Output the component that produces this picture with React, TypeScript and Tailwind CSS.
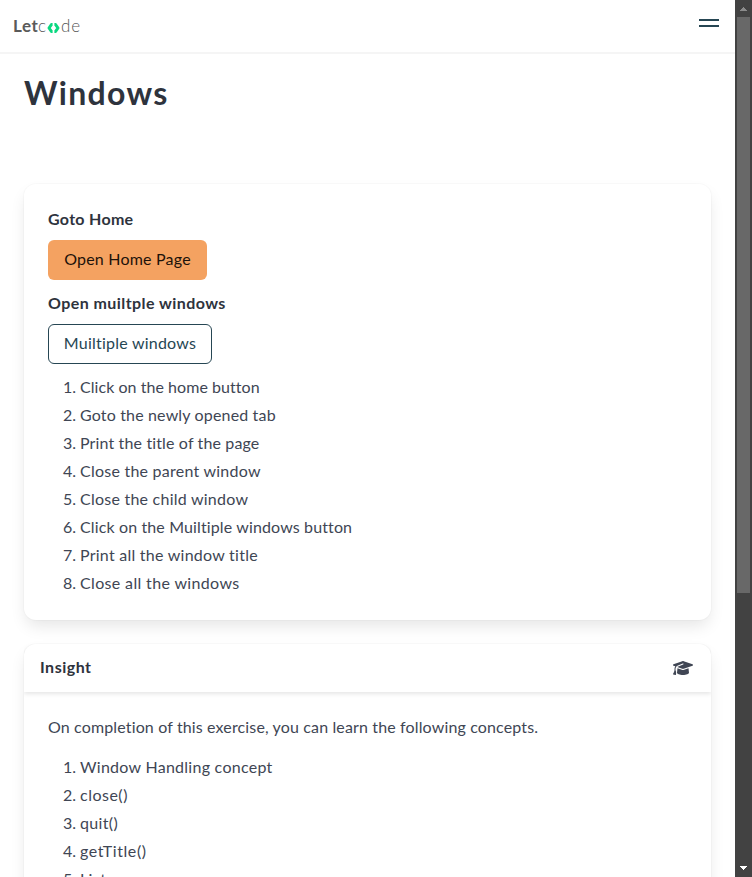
import React from "react";
import { FaGraduationCap } from "react-icons/fa6";

type Line = { text: string; cls: string };

const steps: Line[] = [
  { text: "Click on the home button", cls: "tracking-[0.05px]" },
  { text: "Goto the newly opened tab", cls: "tracking-[0.16px]" },
  { text: "Print the title of the page", cls: "tracking-[0.14px]" },
  { text: "Close the parent window", cls: "tracking-[0.24px]" },
  { text: "Close the child window", cls: "tracking-[0.24px]" },
  { text: "Click on the Muiltiple windows button", cls: "tracking-[0.13px]" },
  { text: "Print all the window title", cls: "tracking-[0.25px]" },
  { text: "Close all the windows", cls: "tracking-[0.35px]" },
];

const concepts: Line[] = [
  { text: "Window Handling concept", cls: "tracking-[0.27px]" },
  { text: "close()", cls: "tracking-[0.5px]" },
  { text: "quit()", cls: "tracking-[0.35px]" },
  { text: "getTitle()", cls: "tracking-[0.6px]" },
  { text: "List", cls: "tracking-[0.4px]" },
];

function Numbered({ items }: { items: Line[] }) {
  return (
    <ol className="flex flex-col gap-1">
      {items.map((item, i) => (
        <li key={item.text} className="flex h-6 whitespace-nowrap leading-[22px]">
          <span className="w-7 text-right">{i + 1}.</span>
          <span className={`ml-1 ${item.cls}`}>{item.text}</span>
        </li>
      ))}
    </ol>
  );
}

function Logo() {
  return (
    <div className="flex h-5 items-center text-[17px] leading-5 text-[#5a5a5a]">
      <span className="w-[25px] font-bold tracking-[0.5px]">Let</span>
      <span className="w-[9px] font-[300] tracking-[0.5px] text-[#555]">c</span>
      <svg className="mt-[3px] h-2.5 w-[13px]" viewBox="0 0 13 10" fill="none" stroke="#0bd880" strokeWidth="3" strokeLinejoin="round">
        <path d="M5.6 1.6H4.4L2 5L4.4 8.4H5.6M7.4 1.6H8.6L11 5L8.6 8.4H7.4" />
      </svg>
      <span className="ml-px font-[300] tracking-[1px] text-[#555]">de</span>
    </div>
  );
}

const boxShadow =
  "shadow-[0_8px_16px_-2px_rgba(10,10,10,0.1),0_0_0_1px_rgba(10,10,10,0.02)]";

export default function App() {
  return (
    <div className="flex h-[877px] w-[752px] overflow-hidden bg-white font-['Lato','Liberation_Sans',sans-serif] text-base text-[#404654]">
      <div className="flex w-[735px] shrink-0 flex-col overflow-hidden">
        <nav className="flex h-[52px] shrink-0 items-center justify-between pl-[13px] pr-4 shadow-[0_2px_0_0_#f5f5f5]">
          <Logo />
          <div className="mb-[6px] flex w-5 flex-col gap-1">
            <div className="h-0.5 bg-[#264653]" />
            <div className="h-0.5 bg-[#264653]" />
          </div>
        </nav>
        <main className="flex flex-col px-6">
          <h1 className="mt-[23px] h-9 text-[32px] font-bold leading-9 tracking-[1.3px] text-[#2e333d]">Windows</h1>
          <section className={`mt-[73px] h-[436px] shrink-0 rounded-xl bg-white p-6 ${boxShadow}`}>
            <div className="h-6 font-bold leading-[22px] text-[#2e333d]">
              <span className="tracking-[0.3px]">Goto Home</span>
            </div>
            <button className="mt-2 flex h-10 w-[159px] items-center justify-center rounded-md bg-[#f4a261] pb-0.5 text-[#1d120a]">
              <span className="tracking-[0.2px]">Open Home Page</span>
            </button>
            <div className="mt-3 h-6 font-bold leading-[22px] text-[#2e333d]">
              <span className="tracking-[0.43px]">Open muiltple windows</span>
            </div>
            <button className="mb-3 mt-2 flex h-10 w-[164px] items-center justify-center rounded-md border border-[#264653] bg-white pb-0.5 text-[#264653]">
              <span className="tracking-[0.23px]">Muiltiple windows</span>
            </button>
            <Numbered items={steps} />
          </section>
          <section className={`mt-6 h-[300px] shrink-0 rounded-xl bg-white ${boxShadow}`}>
            <header className="flex h-12 items-center justify-between rounded-t-xl pl-4 pr-[18px] shadow-[0_2px_4px_rgba(10,10,10,0.1)] [clip-path:inset(0_0_-8px_0)]">
              <span className="pb-0.5 font-bold tracking-[0.5px] text-[#2e333d]">Insight</span>
              <FaGraduationCap className="h-4 w-5" />
            </header>
            <div className="p-6">
              <p className="mb-4 h-6 whitespace-nowrap leading-[22px]">
                <span className="tracking-[0.14px]">On completion of this exercise, you can learn the following concepts.</span>
              </p>
              <Numbered items={concepts} />
            </div>
          </section>
        </main>
      </div>
      <div className="flex w-[17px] flex-col items-center bg-[#424242]">
        <div className="flex h-[17px] w-full items-center justify-center">
          <svg className="h-1 w-[7px]" viewBox="0 0 7 4" shapeRendering="crispEdges" fill="#8b8b8b">
            <path d="M3 0h1v1h1v1h1v1h1v1H0V3h1V2h1V1h1z" />
          </svg>
        </div>
        <div className="h-[576px] w-[13px] bg-[#686868]" />
        <div className="mt-auto flex h-[17px] w-full items-center justify-center pb-px">
          <svg className="h-1 w-[7px]" viewBox="0 0 7 4" shapeRendering="crispEdges" fill="#ffffff">
            <path d="M0 0h7v1H6v1H5v1H4v1H3V3H2V2H1V1H0z" />
          </svg>
        </div>
      </div>
    </div>
  );
}
